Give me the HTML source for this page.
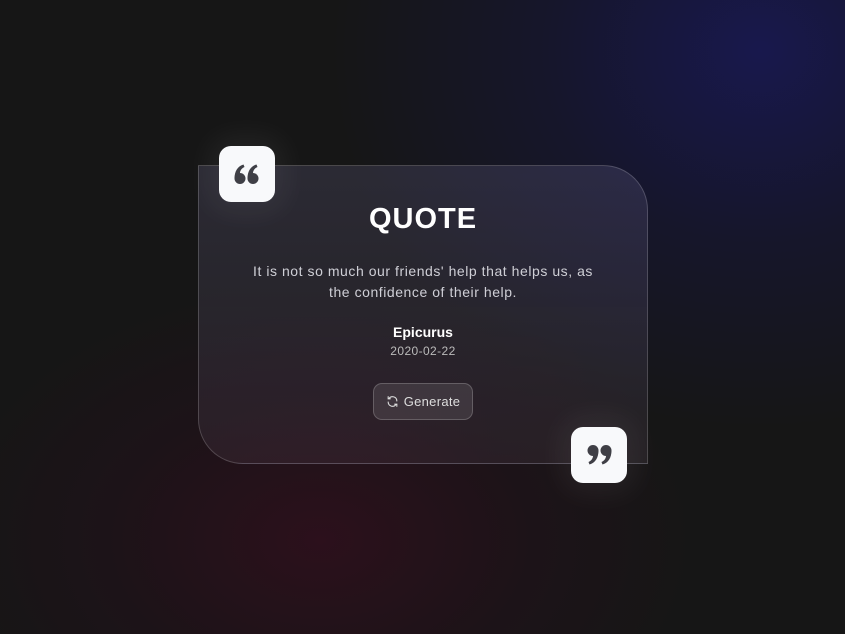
<!DOCTYPE html>
<html><head><style>
html,body{margin:0;width:845px;height:634px;overflow:hidden}
body{background:#161616;position:relative;font-family:"Liberation Sans",sans-serif}
.bgw{position:absolute;left:0;top:0;width:845px;height:634px;overflow:hidden}
.bg1{position:absolute;left:330px;top:-330px;width:860px;height:760px;background:radial-gradient(closest-side,rgba(24,24,80,.95),rgba(22,22,60,.55) 50%,rgba(22,22,22,0));}
.bg2{position:absolute;left:-60px;top:280px;width:760px;height:520px;background:radial-gradient(closest-side,rgba(45,16,28,.95),rgba(35,16,26,.5) 55%,rgba(22,22,22,0));}
.card{position:absolute;left:198px;top:165px;width:448px;height:297px;border:1px solid rgba(255,255,255,.18);border-radius:0 45px 0 45px;background:linear-gradient(180deg,rgba(120,115,160,.22),rgba(120,100,120,.14));text-align:center;color:#fff}
h1{margin:0;position:absolute;top:37px;width:100%;font-size:29px;font-weight:bold;letter-spacing:1px}
.q{position:absolute;top:95px;left:44px;right:44px;font-size:14px;line-height:21px;color:#cfcfd6;letter-spacing:.55px}
.a{position:absolute;top:158px;width:100%;font-size:14px;font-weight:bold}
.d{position:absolute;top:178px;width:100%;font-size:12px;color:#bbb;letter-spacing:.4px}
.btn{position:absolute;left:174px;top:217px;width:100px;height:37px;border:1px solid rgba(255,255,255,.2);border-radius:9px;background:rgba(255,255,255,.1);font-size:13px;color:#ddd;line-height:35px;box-sizing:border-box;letter-spacing:.3px}
.ic{position:absolute;width:56px;height:56px;border-radius:12px;background:#f8f9fb;box-shadow:0 0 30px 10px rgba(255,255,255,.06);display:flex;align-items:center;justify-content:center}
</style></head><body>
<div class="bgw"><div class="bg1"></div><div class="bg2"></div></div>
<div class="card">
<h1>QUOTE</h1>
<div class="q">It is not so much our friends' help that helps us, as the confidence of their help.</div>
<div class="a">Epicurus</div>
<div class="d">2020-02-22</div>
<div class="btn"><svg width="13" height="13" viewBox="0 0 24 24" style="vertical-align:-2px;margin-right:5px" fill="none" stroke="#ddd" stroke-width="2" stroke-linecap="round"><path d="M20 11a8 8 0 0 0-14.5-4.5M4 3v4h4M4 13a8 8 0 0 0 14.5 4.5M20 21v-4h-4"/></svg>Generate</div>
</div>
<div class="ic" style="left:219px;top:146px"><svg width="26" height="22" viewBox="0 0 26 22" fill="#3f3f46"><circle cx="6" cy="15.5" r="5.5"/><circle cx="19" cy="15.5" r="5.5"/><path d="M0.5 15.5C0.5 8 4 3 9.5 1.5l1 2.5C7 5.5 6 8.5 6 10z M13.5 15.5C13.5 8 17 3 22.5 1.5l1 2.5C20 5.5 19 8.5 19 10z"/></svg></div>
<div class="ic" style="left:571px;top:427px"><svg width="26" height="22" viewBox="0 0 26 22" fill="#3f3f46" style="transform:rotate(180deg)"><circle cx="6" cy="15.5" r="5.5"/><circle cx="19" cy="15.5" r="5.5"/><path d="M0.5 15.5C0.5 8 4 3 9.5 1.5l1 2.5C7 5.5 6 8.5 6 10z M13.5 15.5C13.5 8 17 3 22.5 1.5l1 2.5C20 5.5 19 8.5 19 10z"/></svg></div>
</body></html>
